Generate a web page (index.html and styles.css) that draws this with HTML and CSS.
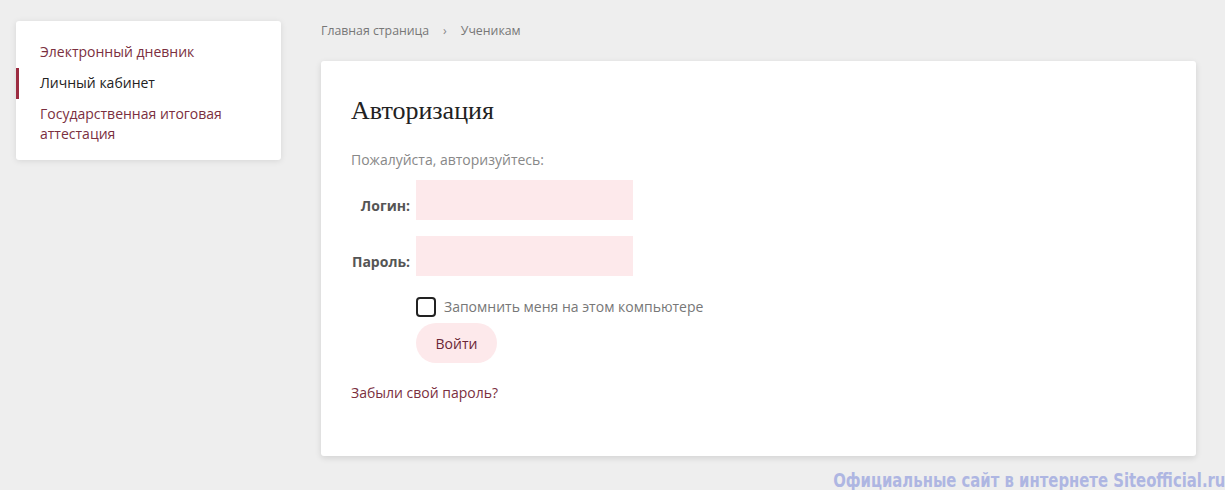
FILE: index.html
```html
<!DOCTYPE html>
<html lang="ru">
<head>
<meta charset="utf-8">
<title>Авторизация</title>
<link rel="stylesheet" href="styles.css">
</head>
<body>
<div class="page">
  <aside class="sidebar">
    <ul class="side-menu">
      <li class="side-item"><a href="#">Электронный дневник</a></li>
      <li class="side-item active"><a href="#">Личный кабинет</a></li>
      <li class="side-item"><a href="#">Государственная итоговая аттестация</a></li>
    </ul>
  </aside>
  <main class="content">
    <nav class="breadcrumbs">
      <a href="#">Главная страница</a>
      <span class="sep">›</span>
      <a href="#">Ученикам</a>
    </nav>
    <section class="card">
      <h1 class="title">Авторизация</h1>
      <p class="hint">Пожалуйста, авторизуйтесь:</p>
      <form class="auth-form">
        <div class="row">
          <label class="label">Логин:</label>
          <input class="field" type="text">
        </div>
        <div class="row">
          <label class="label">Пароль:</label>
          <input class="field" type="password">
        </div>
        <label class="remember">
          <span class="checkbox"></span>
          <span>Запомнить меня на этом компьютере</span>
        </label>
        <button class="btn" type="button">Войти</button>
      </form>
      <a class="forgot" href="#">Забыли свой пароль?</a>
    </section>
  </main>
</div>
<div class="watermark">Официальные сайт в интернете Siteofficial.ru</div>
</body>
</html>
```

FILE: styles.css
```css
* { box-sizing: border-box; }
html, body { margin: 0; padding: 0; }
body {
  background: #eeeeee;
  font-family: "Open Sans", "Noto Sans", sans-serif;
  font-size: 14px;
  color: #333;
  height: 490px;
  overflow: hidden;
  position: relative;
}
a { text-decoration: none; }

.page {
  display: flex;
  align-items: flex-start;
  gap: 40px;
  padding-left: 16px;
}

.sidebar {
  width: 265px;
  margin-top: 21px;
  background: #fff;
  border-radius: 3px;
  box-shadow: 0 1px 6px rgba(0,0,0,0.10);
  padding: 16px 0 10px;
}
.side-menu { list-style: none; margin: 0; padding: 0; }
.side-item {
  padding: 5px 40px 6px 21px;
  line-height: 20px;
  border-left: 3px solid transparent;
}
.side-item a { color: #7b2f40; }
.side-item.active { border-left-color: #9b2b40; }
.side-item.active a { color: #222; }

.content {
  width: 875px;
  padding-top: 21px;
}
.breadcrumbs {
  line-height: 20px;
  font-size: 12.3px;
  color: #777;
  margin-bottom: 20px;
  display: flex;
  gap: 14px;
}
.breadcrumbs a { color: #777; }
.breadcrumbs .sep { color: #888; }

.card {
  background: #fff;
  border-radius: 3px;
  box-shadow: 0 2px 6px rgba(0,0,0,0.12);
  padding: 35px 30px 53px;
  height: 395px;
}
.title {
  margin: 0 0 24px;
  font-family: "Liberation Serif", "DejaVu Serif", serif;
  font-weight: normal;
  font-size: 26px;
  line-height: 30px;
  color: #222;
}
.hint {
  margin: 0 0 10px;
  line-height: 20px;
  color: #888;
}
.auth-form {
  display: flex;
  flex-direction: column;
  align-items: flex-start;
}
.row {
  display: flex;
  align-items: flex-end;
  gap: 6px;
  margin-bottom: 16px;
}
.row + .row { margin-bottom: 21px; }
.label {
  width: 59px;
  text-align: right;
  font-weight: bold;
  color: #555;
  line-height: 20px;
  margin-bottom: 4px;
}
.field {
  width: 217px;
  height: 40px;
  border: none;
  background: #fde9eb;
  outline: none;
  padding: 0 10px;
}
.remember {
  margin-left: 65px;
  display: flex;
  align-items: center;
  gap: 8px;
  height: 20px;
  color: #777;
  line-height: 20px;
}
.checkbox {
  width: 20px;
  height: 20px;
  border: 2px solid #222;
  border-radius: 4px;
}
.btn {
  margin: 6px 0 0 65px;
  width: 81px;
  height: 40px;
  border: none;
  border-radius: 20px;
  background: #fde9eb;
  color: #6b2737;
  font-family: inherit;
  font-size: 14px;
}
.forgot {
  display: block;
  margin-top: 20px;
  line-height: 20px;
  color: #7b2f40;
}

.watermark {
  position: absolute;
  right: 0;
  bottom: 0;
  font-family: "DejaVu Sans Condensed", "DejaVu Sans", sans-serif;
  font-weight: bold;
  font-size: 20px;
  line-height: 20px;
  color: #aeb6e2;
  white-space: nowrap;
  transform: scaleX(0.825);
  transform-origin: right bottom;
}
```
